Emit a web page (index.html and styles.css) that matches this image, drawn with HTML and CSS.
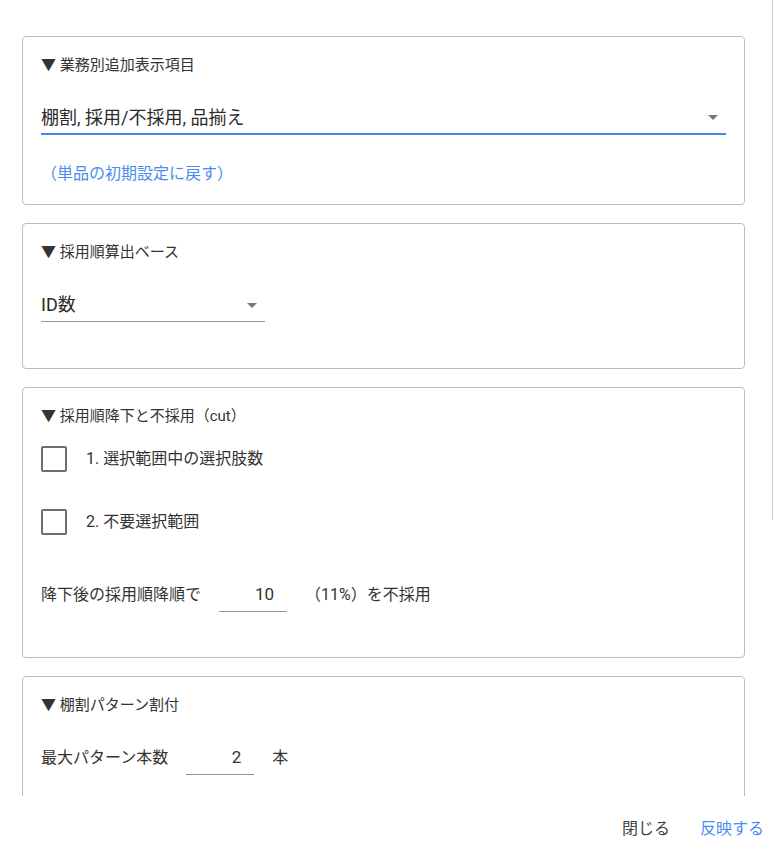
FILE: index.html
```html
<!DOCTYPE html>
<html lang="ja">
<head>
    <meta charset="UTF-8">
    <meta name="viewport" content="width=device-width, initial-scale=1.0">
    <title>表示設定</title>
    <link rel="stylesheet" href="styles.css">
</head>
<body>
    <div class="dialog">
        <div class="content">
            <div class="scrollbar"></div>

            <section class="card">
                <div class="card-title">▼ 業務別追加表示項目</div>
                <div class="select select-wide active">
                    <span class="select-value">棚割, 採用/不採用, 品揃え</span>
                    <span class="arrow"></span>
                </div>
                <a class="reset-link">（単品の初期設定に戻す）</a>
            </section>

            <section class="card card-tall">
                <div class="card-title">▼ 採用順算出ベース</div>
                <div class="select select-narrow">
                    <span class="select-value">ID数</span>
                    <span class="arrow"></span>
                </div>
            </section>

            <section class="card card-cut">
                <div class="card-title">▼ 採用順降下と不採用（cut）</div>
                <label class="check-row first">
                    <span class="checkbox"></span>
                    <span class="check-label">1. 選択範囲中の選択肢数</span>
                </label>
                <label class="check-row">
                    <span class="checkbox"></span>
                    <span class="check-label">2. 不要選択範囲</span>
                </label>
                <div class="number-row cut-row">
                    <span>降下後の採用順降順で</span>
                    <span class="number-input">10</span>
                    <span>（11%）を不採用</span>
                </div>
            </section>

            <section class="card card-tall">
                <div class="card-title">▼ 棚割パターン割付</div>
                <div class="number-row pattern-row">
                    <span>最大パターン本数</span>
                    <span class="number-input">2</span>
                    <span>本</span>
                </div>
            </section>
        </div>

        <div class="actions">
            <button class="btn btn-close">閉じる</button>
            <button class="btn btn-apply">反映する</button>
        </div>
    </div>
</body>
</html>
```

FILE: styles.css
```css
body {
    margin: 0;
    background: #fff;
    font-family: Roboto, "Noto Sans CJK JP", sans-serif;
    font-size: 16px;
    color: #333;
}
.dialog {
    width: 773px;
    height: 847px;
    display: flex;
    flex-direction: column;
}
.content {
    position: relative;
    height: 796px;
    overflow: hidden;
    padding: 36px 28px 0 22px;
    box-sizing: border-box;
}
.scrollbar {
    position: absolute;
    top: 0;
    right: 0;
    width: 1px;
    height: 520px;
    background: #c9c9c9;
}
.card {
    border: 1px solid #b3c0c8;
    border-radius: 4px;
    padding: 16px 18px 18px 18px;
    margin-bottom: 18px;
}
.card-tall {
    padding-bottom: 46px;
}
.card-cut {
    padding-bottom: 45px;
}
.card-title {
    line-height: 24px;
    font-size: 15px;
    color: #333;
}
.select {
    position: relative;
    display: flex;
    align-items: center;
    height: 30px;
    padding-bottom: 3px;
    border-bottom: 1px solid #949494;
}
.select-wide {
    margin-top: 24px;
    height: 29px;
}
.active {
    border-bottom: 2px solid #4285f4;
}
.select-narrow {
    margin-top: 24px;
    width: 224px;
}
.select-value {
    font-size: 18px;
    color: #2a2a2a;
}
.arrow {
    position: absolute;
    right: 8px;
    top: 50%;
    margin-top: -2px;
    width: 0;
    height: 0;
    border-left: 5px solid transparent;
    border-right: 5px solid transparent;
    border-top: 5px solid #777;
}
.reset-link {
    display: block;
    margin-top: 27px;
    line-height: 24px;
    font-size: 16px;
    color: #4a8cf0;
}
.check-row {
    display: flex;
    align-items: center;
    height: 26px;
    margin-top: 37px;
}
.check-row.first {
    margin-top: 18px;
}
.check-label {
    padding-bottom: 4px;
}
.checkbox {
    width: 22px;
    height: 22px;
    border: 2px solid #6f6f6f;
    border-radius: 2px;
    margin-right: 19px;
}
.number-row {
    display: flex;
    align-items: flex-end;
}
.number-row > span:not(.number-input) {
    line-height: 24px;
    padding-bottom: 5px;
}
.cut-row {
    margin-top: 44px;
}
.pattern-row {
    margin-top: 25px;
}
.number-input {
    width: 68px;
    height: 33px;
    line-height: 30px;
    border-bottom: 1px solid #949494;
    text-align: right;
    padding-right: 13px;
    box-sizing: border-box;
    font-size: 17px;
    margin: 0 18px 0 18px;
}
.actions {
    display: flex;
    justify-content: flex-end;
    align-items: center;
    height: 51px;
    padding-right: 1px;
    gap: 14px;
}
.btn {
    border: none;
    background: none;
    font-family: inherit;
    font-size: 16px;
    padding: 0 8px;
    margin-top: 10px;
    cursor: pointer;
}
.btn-close {
    color: #444;
}
.btn-apply {
    color: #4a8cf0;
}
```
